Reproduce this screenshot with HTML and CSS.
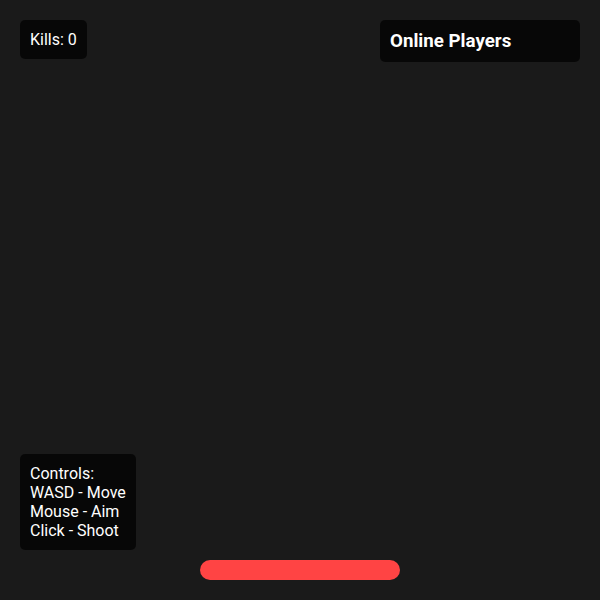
FILE: index.html
```html
<!DOCTYPE html>
<html>
<head>
<meta charset="utf-8">
<link rel="stylesheet" href="styles.css">
</head>
<body>
<div class="game">
  <div class="hud kills">Kills: 0</div>
  <div class="hud players"><h3 class="players-title">Online Players</h3></div>
  <div class="hud controls">Controls:<br>WASD - Move<br>Mouse - Aim<br>Click - Shoot</div>
  <div class="health"><div class="health-fill"></div></div>
</div>
</body>
</html>
```
FILE: styles.css
```css
html, body {
  margin: 0;
  padding: 0;
  background: #1a1a1a;
  font-family: Roboto, "Liberation Sans", sans-serif;
  color: #ffffff;
}
.game {
  position: relative;
  width: 600px;
  height: 600px;
  overflow: hidden;
  background: #1a1a1a;
}
.hud {
  position: absolute;
  background: rgba(0, 0, 0, 0.7);
  border-radius: 5px;
  padding: 10px;
  font-size: 16px;
  line-height: 19px;
}
.kills {
  top: 20px;
  left: 20px;
}
.players {
  top: 20px;
  right: 20px;
  width: 180px;
}
.players-title {
  margin: 0;
  font-size: 18.72px;
  font-weight: bold;
  line-height: 22px;
}
.controls {
  left: 20px;
  bottom: 50px;
}
.health {
  position: absolute;
  left: 200px;
  bottom: 20px;
  width: 200px;
  height: 20px;
  border-radius: 10px;
  overflow: hidden;
  background: #333333;
}
.health-fill {
  width: 100%;
  height: 100%;
  background: #ff4444;
}
```
